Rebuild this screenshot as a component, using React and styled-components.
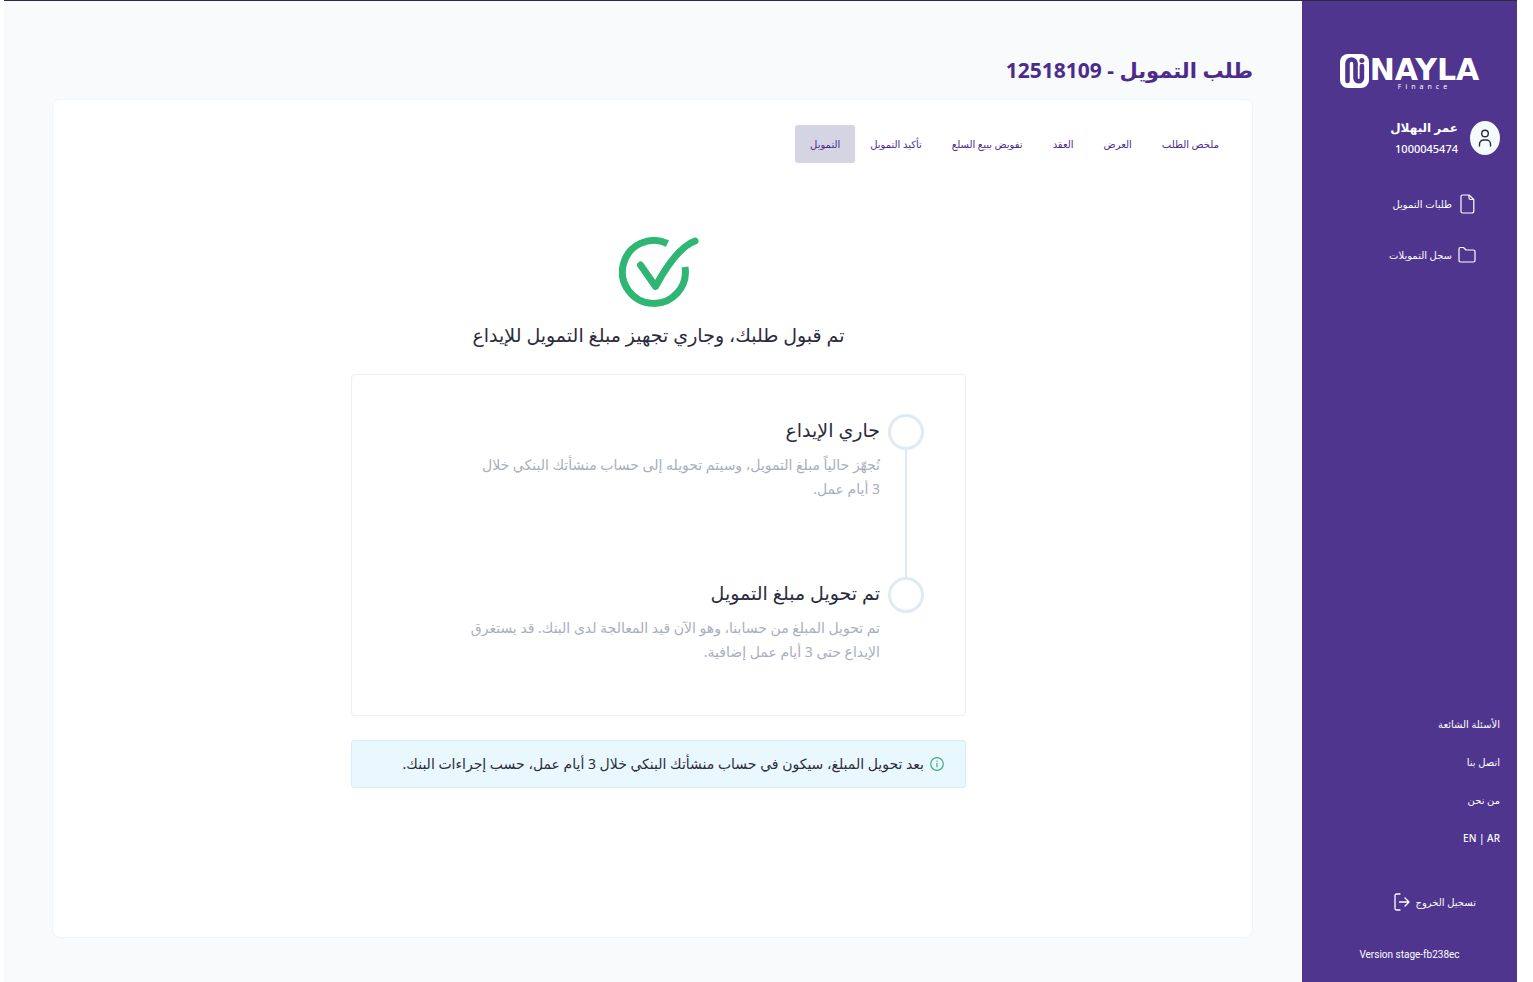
import styled, {createGlobalStyle} from 'styled-components';

const GlobalStyle = createGlobalStyle`
    * {
        box-sizing: border-box;
    }

    body {
        margin: 0;
        background: #fff;
        font-family: 'Noto Sans', 'DejaVu Sans', sans-serif;
        color: #2b2b3d;
    }

    h1, h2, h3, p, ul, ol {
        margin: 0;
        padding: 0;
    }

    ul, ol {
        list-style: none;
    }
`;

const tabs = [
    'ملخص الطلب',
    'العرض',
    'العقد',
    'تفويض ببيع السلع',
    'تأكيد التمويل',
    'التمويل',
];

const steps = [
    {
        title: 'جاري الإيداع',
        text: 'نُجهّز حالياً مبلغ التمويل، وسيتم تحويله إلى حساب منشأتك البنكي خلال 3\u00a0أيام عمل.',
    },
    {
        title: 'تم تحويل مبلغ التمويل',
        text: 'تم تحويل المبلغ من حسابنا، وهو الآن قيد المعالجة لدى البنك. قد يستغرق الإيداع حتى 3\u00a0أيام عمل إضافية.',
    },
];

const links = ['الأسئلة الشائعة', 'اتصل بنا', 'من نحن'];

const LogoMark = () => (
    <svg width='29' height='34' viewBox='0 0 29 34' aria-hidden='true'>
        <rect x='0' y='0' width='29' height='34' rx='8' fill='#fff' />
        <path
            d='M7.500 27V9.500a4 4 0 0 1 8 0V24a3.200 3.200 0 0 0 6.400 0V12'
            fill='none'
            stroke='#50358f'
            strokeWidth='4.600'
            strokeLinecap='round'
        />
        <circle cx='21.900' cy='6.500' r='2.500' fill='#50358f' />
    </svg>
);

const UserIcon = () => (
    <svg width='14' height='20' viewBox='0 0 14 20' fill='none' stroke='#2b2b3d' strokeWidth='1.400' strokeLinecap='round'>
        <circle cx='7' cy='5.500' r='3.300' />
        <path d='M1.500 18v-2a4 4 0 0 1 4-4h3a4 4 0 0 1 4 4v2' />
    </svg>
);

const FileIcon = () => (
    <svg width='18' height='20' viewBox='0 0 18 20' fill='none' stroke='#fff' strokeWidth='1.200' strokeLinejoin='round'>
        <path d='M4.500 1h6.500L15.800 5.500V17a2 2 0 0 1-2 2H4.500A1.500 1.500 0 0 1 3 17.500v-15A1.500 1.500 0 0 1 4.500 1z' />
        <path d='M11 1v3a1.500 1.500 0 0 0 1.500 1.500h3.300' />
    </svg>
);

const FolderIcon = () => (
    <svg width='18' height='20' viewBox='0 0 18 20' fill='none' stroke='#fff' strokeWidth='1.200' strokeLinejoin='round'>
        <path d='M1 4a1.500 1.500 0 0 1 1.500-1.500h3L8 5h7.500A1.500 1.500 0 0 1 17 6.500v9a1.500 1.500 0 0 1-1.500 1.500h-13A1.500 1.500 0 0 1 1 15.500z' />
    </svg>
);

const LogoutIcon = () => (
    <svg width='16' height='18' viewBox='0 0 16 18' fill='none' stroke='#fff' strokeWidth='1.300' strokeLinecap='round' strokeLinejoin='round'>
        <path d='M6 1H2.500A1.500 1.500 0 0 0 1 2.500v13A1.500 1.500 0 0 0 2.500 17H6' />
        <path d='M5.500 9H15M11 5l4 4-4 4' />
    </svg>
);

const CheckIcon = () => (
    <svg width='80' height='72' viewBox='0 0 80 72' fill='none' stroke='#2fb574' strokeWidth='7' aria-hidden='true'>
        <path d='M48.500 7.500A31.500 31.500 0 1 0 66 31' />
        <path d='M21.500 29L36.500 50.500C46.500 32 60 11 76 5' strokeLinecap='round' strokeLinejoin='round' />
    </svg>
);

const InfoIcon = () => (
    <svg width='14' height='14' viewBox='0 0 14 14' fill='none' stroke='#3fae85' aria-hidden='true'>
        <circle cx='7' cy='7' r='6.300' strokeWidth='1.200' />
        <path d='M7 6v4.200M7 3.500v1.300' strokeWidth='1.200' />
    </svg>
);

export default function App() {
    return (
        <>
            <GlobalStyle />
            <Page dir='rtl' lang='ar'>
                <Sidebar>
                    <Logo dir='ltr'>
                        <LogoMark />
                        <LogoWords>
                            <LogoName>NAYLA</LogoName>
                            <LogoSub>Finance</LogoSub>
                        </LogoWords>
                    </Logo>
                    <Profile>
                        <Avatar>
                            <UserIcon />
                        </Avatar>
                        <div>
                            <UserName>عمر البهلال</UserName>
                            <UserNumber>1000045474</UserNumber>
                        </div>
                    </Profile>
                    <Menu>
                        <MenuLink href='#requests'>
                            <FileIcon />
                            طلبات التمويل
                        </MenuLink>
                        <MenuLink href='#history'>
                            <FolderIcon />
                            سجل التمويلات
                        </MenuLink>
                    </Menu>
                    <FooterLinks>
                        {links.map((link) => (
                            <FooterLink href='#info' key={link}>
                                {link}
                            </FooterLink>
                        ))}
                        <FooterLink href='#language' dir='ltr'>
                            EN | AR
                        </FooterLink>
                    </FooterLinks>
                    <Logout type='button'>
                        تسجيل الخروج
                        <LogoutIcon />
                    </Logout>
                    <Version dir='ltr'>Version stage-fb238ec</Version>
                </Sidebar>

                <Main>
                    <Title>طلب التمويل - 12518109</Title>
                    <Card>
                        <Tabs>
                            {tabs.map((tab, i) => (
                                <Tab type='button' key={tab} $active={i === tabs.length - 1}>
                                    {tab}
                                </Tab>
                            ))}
                        </Tabs>
                        <Result>
                            <CheckIcon />
                            <ResultTitle>تم قبول طلبك، وجاري تجهيز مبلغ التمويل للإيداع</ResultTitle>
                            <Steps>
                                {steps.map((step) => (
                                    <Step key={step.title}>
                                        <Rail>
                                            <Dot />
                                            <Line />
                                        </Rail>
                                        <StepBody>
                                            <StepTitle>{step.title}</StepTitle>
                                            <StepText>{step.text}</StepText>
                                        </StepBody>
                                    </Step>
                                ))}
                            </Steps>
                            <Notice>
                                <InfoIcon />
                                <p>بعد تحويل المبلغ، سيكون في حساب منشأتك البنكي خلال 3 أيام عمل، حسب إجراءات البنك.</p>
                            </Notice>
                        </Result>
                    </Card>
                </Main>
            </Page>
        </>
    );
}

const Page = styled.div`
    display: flex;
    min-height: 100vh;
    margin: 0 16px 0 4px;
    border-top: 1px solid #2b2b3d;
    background: #f9fafc;
`;

const Sidebar = styled.aside`
    display: flex;
    flex-direction: column;
    flex: 0 0 215px;
    padding: 53px 17px 18px;
    background: #50358f;
    color: #fff;
`;

const Logo = styled.div`
    display: flex;
    align-self: center;
    gap: 1px;
`;

const LogoWords = styled.div`
    display: flex;
    flex-direction: column;
    padding-top: 4px;
`;

const LogoName = styled.span`
    font: 700 30px/24px 'DejaVu Sans', sans-serif;
`;

const LogoSub = styled.span`
    align-self: center;
    font-size: 7px;
    line-height: 10px;
    letter-spacing: 4px;
`;

const Profile = styled.div`
    display: flex;
    align-items: center;
    gap: 12px;
    margin-top: 25px;
`;

const Avatar = styled.div`
    display: flex;
    align-items: center;
    justify-content: center;
    width: 30px;
    height: 34px;
    border-radius: 50%;
    background: #f5fafc;
`;

const UserName = styled.p`
    font-size: 12px;
    font-weight: 700;
    line-height: 22px;
`;

const UserNumber = styled.p`
    font-size: 11px;
    font-weight: 500;
    line-height: 20px;
`;

const Menu = styled.nav`
    display: flex;
    flex-direction: column;
    gap: 27px;
    margin: 33px 24px 0 0;
`;

const MenuLink = styled.a`
    display: flex;
    align-items: center;
    gap: 6px;
    color: inherit;
    font-size: 10px;
    font-weight: 500;
    line-height: 24px;
    text-decoration: none;
`;

const FooterLinks = styled.nav`
    display: flex;
    flex-direction: column;
    align-items: flex-start;
    gap: 14px;
    margin-top: auto;
`;

const FooterLink = styled.a`
    color: inherit;
    font-size: 10px;
    font-weight: 500;
    line-height: 24px;
    text-decoration: none;
`;

const Logout = styled.button`
    display: flex;
    align-items: center;
    align-self: flex-start;
    gap: 6px;
    margin: 40px 24px 0 0;
    padding: 0;
    border: 0;
    background: none;
    color: inherit;
    font: inherit;
    font-size: 10px;
    font-weight: 500;
    line-height: 24px;
    cursor: pointer;
`;

const Version = styled.p`
    margin-top: 32px;
    font-family: Roboto, sans-serif;
    font-size: 10px;
    line-height: 18px;
    text-align: center;
`;

const Main = styled.main`
    display: flex;
    flex: 1;
    flex-direction: column;
    padding: 49px 49px 44px 48px;
`;

const Title = styled.h1`
    margin-bottom: 9px;
    color: #4b2c8c;
    font-size: 21px;
    line-height: 40px;
`;

const Card = styled.section`
    flex: 1;
    padding: 25px 18px 25px 30px;
    border: 1px solid #edf6fb;
    border-radius: 8px;
    background: #fff;
`;

const Tabs = styled.nav`
    display: flex;
`;

const Tab = styled.button`
    padding: 0 15px;
    border: 0;
    border-radius: 3px;
    background: ${({$active}) => ($active ? '#d4d4e2' : 'transparent')};
    color: #4b2c8c;
    font: inherit;
    font-size: 10px;
    font-weight: 500;
    line-height: 38px;
    cursor: pointer;
`;

const Result = styled.div`
    display: flex;
    flex-direction: column;
    align-items: center;
    width: 100%;
    max-width: 615px;
    margin: 73px auto 0;
`;

const ResultTitle = styled.h2`
    margin: 11px 0 23px;
    font-size: 19px;
    font-weight: 500;
    line-height: 32px;
`;

const Steps = styled.ol`
    width: 100%;
    padding: 39px 41px 48px;
    border: 1px solid #e9f1f6;
    border-radius: 4px;
`;

const Step = styled.li`
    display: flex;
    gap: 8px;
    min-height: 163px;

    &:last-child {
        min-height: 90px;
    }
`;

const Rail = styled.div`
    display: flex;
    flex-direction: column;
    align-items: center;
`;

const Dot = styled.span`
    width: 36px;
    height: 36px;
    border: 3px solid #dfebf2;
    border-radius: 50%;
`;

const Line = styled.span`
    flex: 1;
    width: 2px;
    background: #dfebf2;

    ${Step}:last-child & {
        display: none;
    }
`;

const StepBody = styled.div`
    flex: 1;
`;

const StepTitle = styled.h3`
    margin-bottom: 7px;
    font-size: 19px;
    font-weight: 500;
    line-height: 32px;
`;

const StepText = styled.p`
    max-width: 424px;
    color: #a9aec2;
    font-size: 14px;
    line-height: 24px;
`;

const Notice = styled.div`
    display: flex;
    align-items: center;
    gap: 6px;
    width: 100%;
    margin-top: 24px;
    padding: 11px 21px;
    border: 1px solid #d9ebf3;
    border-radius: 3px;
    background: #e9f8ff;
    font-size: 14px;
    line-height: 24px;
`;
